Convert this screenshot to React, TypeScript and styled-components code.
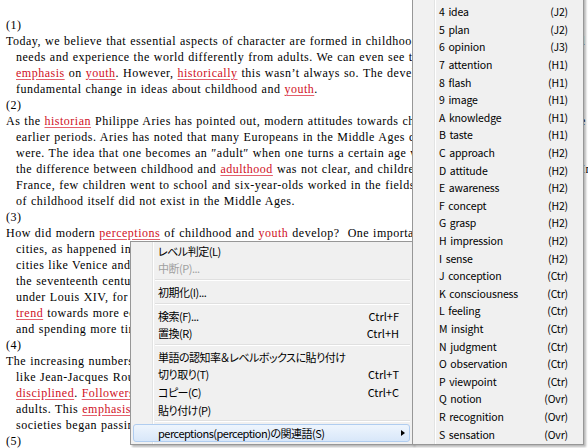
import React from 'react'
import styled, { createGlobalStyle, css } from 'styled-components'

// [word] = red + underline, {word} = red only
const paragraphs: string[][] = [
  ['(1)'],
  [
    'Today, we believe that essential aspects of character are formed in childhood, and that children have special',
    'needs and experience the world differently from adults. We can even see this in the modern',
    '[emphasis] on [youth]. However, [historically] this wasn’t always so. The development of this idea reflects a',
    'fundamental change in ideas about childhood and [youth].',
  ],
  ['(2)'],
  [
    'As the [historian] Philippe Aries has pointed out, modern attitudes towards childhood are different from those of',
    'earlier periods. Aries has noted that many Europeans in the Middle Ages did not know how old they',
    'were. The idea that one becomes an ″adult″ when one turns a certain age was not common. In addition,',
    'the difference between childhood and [adulthood] was not clear, and children were treated as small adults. In',
    'France, few children went to school and six-year-olds worked in the fields with adults. The very concept',
    'of childhood itself did not exist in the Middle Ages.',
  ],
  ['(3)'],
  [
    'How did modern [perceptions] of childhood and {youth} develop?  One important factor was the growth of',
    'cities, as happened in Italy and the Netherlands during the sixteenth century. In large trading',
    'cities like Venice and Amsterdam, merchant families began to send their sons to school. In',
    'the seventeenth century, the same thing happened in France and England. In France',
    'under Louis XIV, for example, schools were opened for the children of the nobility. This',
    '[trend] towards more education meant that children were separated from adults for longer',
    'and spending more time with other children of the same age.',
  ],
  ['(4)'],
  [
    'The increasing numbers of schools led to new ideas about childhood. Eighteenth-century thinkers',
    'like Jean-Jacques Rousseau argued that children should not be treated harshly or strictly',
    '[disciplined]. [Followers] of Rousseau believed that children were naturally good and different from',
    'adults. This [emphasis] on the special nature of childhood spread during the nineteenth century, and',
    'societies began passing laws to protect children from hard work in factories and mines.',
  ],
  ['(5)'],
]

type MenuEntry =
  | { kind: 'item'; label: string; shortcut?: string; disabled?: boolean; active?: boolean; sub?: boolean }
  | { kind: 'sep' }

const menuEntries: MenuEntry[] = [
  { kind: 'item', label: 'レベル判定(L)' },
  { kind: 'item', label: '中断(P)...', disabled: true },
  { kind: 'sep' },
  { kind: 'item', label: '初期化(I)...' },
  { kind: 'sep' },
  { kind: 'item', label: '検索(F)...', shortcut: 'Ctrl+F' },
  { kind: 'item', label: '置換(R)', shortcut: 'Ctrl+H' },
  { kind: 'sep' },
  { kind: 'item', label: '単語の認知率＆レベルボックスに貼り付け' },
  { kind: 'item', label: '切り取り(T)', shortcut: 'Ctrl+T' },
  { kind: 'item', label: 'コピー(C)', shortcut: 'Ctrl+C' },
  { kind: 'item', label: '貼り付け(P)' },
  { kind: 'sep' },
  { kind: 'item', label: 'perceptions(perception)の関連語(S)', active: true, sub: true },
]

const related: [string, string][] = [
  ['4 idea', '(J2)'],
  ['5 plan', '(J2)'],
  ['6 opinion', '(J3)'],
  ['7 attention', '(H1)'],
  ['8 flash', '(H1)'],
  ['9 image', '(H1)'],
  ['A knowledge', '(H1)'],
  ['B taste', '(H1)'],
  ['C approach', '(H2)'],
  ['D attitude', '(H2)'],
  ['E awareness', '(H2)'],
  ['F concept', '(H2)'],
  ['G grasp', '(H2)'],
  ['H impression', '(H2)'],
  ['I sense', '(H2)'],
  ['J conception', '(Ctr)'],
  ['K consciousness', '(Ctr)'],
  ['L feeling', '(Ctr)'],
  ['M insight', '(Ctr)'],
  ['N judgment', '(Ctr)'],
  ['O observation', '(Ctr)'],
  ['P viewpoint', '(Ctr)'],
  ['Q notion', '(Ovr)'],
  ['R recognition', '(Ovr)'],
  ['S sensation', '(Ovr)'],
]

const renderMarked = (text: string) =>
  text.split(/(\[[^\]]+\]|\{[^}]+\})/).map((part, i) => {
    if (part.startsWith('[')) return <Hot key={i}>{part.slice(1, -1)}</Hot>
    if (part.startsWith('{')) return <Hot key={i} $plain>{part.slice(1, -1)}</Hot>
    return part
  })

const App: React.FC = () => {
  return (
    <Screen>
      <GlobalStyle />
      <Doc>
        {paragraphs.map((lines, p) => (
          <div key={p}>
            {lines.map((line, i) => (
              <Line key={i} $indent={i > 0}>{renderMarked(line)}</Line>
            ))}
          </div>
        ))}
      </Doc>

      <ContextMenu>
        {menuEntries.map((e, i) =>
          e.kind === 'sep' ? (
            <Separator key={i} />
          ) : (
            <MenuItem key={i} $active={e.active} $disabled={e.disabled}>
              <Label>{e.label}</Label>
              {e.shortcut && <Shortcut>{e.shortcut}</Shortcut>}
              {e.sub && <SubArrow />}
            </MenuItem>
          )
        )}
      </ContextMenu>

      <SubMenu>
        {related.map(([word, level]) => (
          <SubItem key={word}>
            <span>{word}</span>
            <span>{level}</span>
          </SubItem>
        ))}
      </SubMenu>
    </Screen>
  )
}

const GlobalStyle = createGlobalStyle`
  html, body {
    margin: 0;
    padding: 0;
    background: #fff;
  }
  body {
    width: 588px;
    height: 448px;
    overflow: hidden;
  }
`

const Screen = styled.div`
  position: relative;
  width: 588px;
  height: 448px;
  overflow: hidden;
  background: #fff;
`

const Doc = styled.div`
  padding: 17px 0 0 6px;
  font-family: "Liberation Serif", "Noto Sans CJK JP", serif;
  font-size: 12px;
  letter-spacing: 0.5px;
  word-spacing: 0.5px;
  line-height: 16px;
  color: #000;
`

const Line = styled.div<{ $indent?: boolean }>`
  white-space: pre;
  height: 16px;
  padding-left: ${p => (p.$indent ? '10px' : '0')};
`

const Hot = styled.span<{ $plain?: boolean }>`
  color: #d0101e;
  text-decoration: ${p => (p.$plain ? 'none' : 'underline')};
  text-decoration-color: #e4606c;
  text-underline-offset: 2px;
`

const menuBase = css`
  position: absolute;
  box-sizing: border-box;
  border: 1px solid #979797;
  box-shadow: 2px 2px 2px rgba(0, 0, 0, 0.28);
  background: linear-gradient(
    to right,
    #f1f1f1 0 21px,
    #e2e3e3 21px 22px,
    #ffffff 22px 23px,
    #f0f0f0 23px
  );
  font-family: "Noto Sans CJK JP", "Noto Sans", sans-serif;
  font-feature-settings: "palt";
  word-spacing: 1.5px;
  color: #000;
`

const ContextMenu = styled.div`
  ${menuBase};
  left: 130px;
  top: 241px;
  width: 283px;
  padding: 0 2px 2px;
  font-size: 11px;
  letter-spacing: -0.5px;
`

const MenuItem = styled.div<{ $active?: boolean; $disabled?: boolean }>`
  box-sizing: border-box;
  display: flex;
  align-items: center;
  height: 17.6px;
  padding: 0 10px 0 24px;
  border: 1px solid transparent;
  border-radius: 3px;
  color: ${p => (p.$disabled ? '#a0a0a0' : '#000')};
  ${p =>
    p.$active &&
    css`
      background: linear-gradient(#eef5fd, #d8e7f9);
      border-color: #b0cdf0;
    `}
`

const Label = styled.span`
  flex: 1;
  white-space: nowrap;
`

const Shortcut = styled.span`
  white-space: nowrap;
  letter-spacing: 0;
`

const SubArrow = styled.span`
  width: 0;
  height: 0;
  margin-right: -6px;
  border-left: 4px solid #000;
  border-top: 3.5px solid transparent;
  border-bottom: 3.5px solid transparent;
`

const Separator = styled.div`
  height: 0;
  margin: 2px 0 2px 22px;
  border-top: 1px solid #e0e0e0;
  border-bottom: 1px solid #fff;
`

const SubMenu = styled.div`
  ${menuBase};
  left: 412px;
  top: -20px;
  width: 172px;
  padding: 22px 2px 1px;
  font-size: 10.5px;
  letter-spacing: -0.15px;
`

const SubItem = styled.div`
  box-sizing: border-box;
  display: flex;
  justify-content: space-between;
  align-items: center;
  height: 17.6px;
  padding: 0 13px 0 24px;
  white-space: nowrap;
`

export default App
